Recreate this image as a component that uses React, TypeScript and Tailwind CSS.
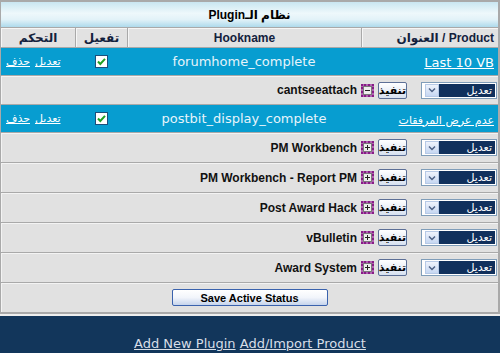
const font = "font-['Liberation_Sans','DejaVu_Sans',sans-serif]";
const verdana = "font-['DejaVu_Sans',sans-serif]";

type Row =
  | { kind: "hook"; product: string; hook: string; productLtr?: boolean }
  | { kind: "item"; label: string; minus?: boolean; h: string };

const rows: Row[] = [
  { kind: "hook", product: "Last 10 VB", hook: "forumhome_complete", productLtr: true },
  { kind: "item", label: "cantseeattach", minus: true, h: "h-[28px]" },
  { kind: "hook", product: "عدم عرض المرفقات", hook: "postbit_display_complete" },
  { kind: "item", label: "PM Workbench", h: "h-[29px]" },
  { kind: "item", label: "PM Workbench - Report PM", h: "h-[29px]" },
  { kind: "item", label: "Post Award Hack", h: "h-[29px]" },
  { kind: "item", label: "vBulletin", h: "h-[29px]" },
  { kind: "item", label: "Award System", h: "h-[29px]" },
];

function CheckBox() {
  return (
    <svg width="13" height="13" viewBox="0 0 13 13">
      <rect x="0.5" y="0.5" width="12" height="12" fill="#ffffff" stroke="#1c4f7c" />
      <path d="M3 6.5 L5.3 9 L10 3.8" fill="none" stroke="#21a121" strokeWidth="2" />
    </svg>
  );
}

function Toggle({ minus }: { minus?: boolean }) {
  return (
    <span className="flex h-[13px] w-[13px] items-center justify-center border-2 border-dotted border-[#861c86] bg-[#b060b0]">
      <svg width="9" height="9" viewBox="0 0 9 9">
        <rect x="0.5" y="0.5" width="8" height="8" fill="#eeeeee" stroke="#7a7a7a" />
        <path d="M2 4.5 H7" stroke="#222" strokeWidth="1" />
        {!minus && <path d="M4.5 2 V7" stroke="#222" strokeWidth="1" />}
      </svg>
    </span>
  );
}

function ActionSelect() {
  return (
    <div className="flex h-[17px] w-[76px] border border-[#7f9db9] bg-white p-px">
      <div className="flex flex-1 items-center bg-[#10305c] pr-[3px] text-[11px] text-white">
        تعديل
      </div>
      <div className="ml-[2px] flex w-[14px] items-center justify-center border border-[#b6c9e6] bg-[linear-gradient(to_bottom,#eef3fc,#c6d7f2)]">
        <svg width="8" height="6" viewBox="0 0 8 6">
          <path d="M1 1.5 L4 4.5 L7 1.5" fill="none" stroke="#4d6185" strokeWidth="1.5" />
        </svg>
      </div>
    </div>
  );
}

function ItemRow({ label, minus, h }: { label: string; minus?: boolean; h: string }) {
  return (
    <div className={`flex ${h} items-center bg-[#e1e1e1] pr-[1px] shadow-[inset_1px_1px_0_#f3f3f3]`}>
      <ActionSelect />
      <button className="ml-[4px] mr-[14px] flex h-[17px] w-[29px] items-center justify-center rounded-[2px] border border-[#5c6f96] bg-[linear-gradient(to_bottom,#ffffff,#d7e1f0)] text-[11px] font-bold text-black">
        تنفيذ
      </button>
      <Toggle minus={minus} />
      <span dir="ltr" className="mr-[4px] text-[12px] font-bold text-[#111]">
        {label}
      </span>
    </div>
  );
}

function HookRow({ product, hook, productLtr }: { product: string; hook: string; productLtr?: boolean }) {
  return (
    <div className="grid h-[27px] grid-cols-[137px_234px_52px_74px] items-center bg-[#079dd0] text-white">
      <div className="pr-[4px]">
        <a
          href="#"
          dir={productLtr ? "ltr" : undefined}
          className={`${verdana} ${productLtr ? "text-[13px]" : "text-[11px]"} text-white underline`}
        >
          {product}
        </a>
      </div>
      <div dir="ltr" className={`${verdana} text-center text-[13px] text-[#e6f4fb]`}>
        {hook}
      </div>
      <div className="flex justify-center">
        <CheckBox />
      </div>
      <div className="flex justify-end gap-[5px] pl-[5px] text-[11px]">
        <a href="#" className="text-white underline">تعديل</a>
        <a href="#" className="text-white underline">حذف</a>
      </div>
    </div>
  );
}

export default function App() {
  return (
    <div dir="rtl" className={`${font} w-[500px] bg-white`}>
      <div className="flex flex-col gap-px bg-[#a9a9a9] pb-[2px] pl-px pr-[2px] pt-[2px]">
        <div className="flex h-[25px] items-center justify-center bg-[linear-gradient(to_bottom,#c9e6f1,#eef8fb_45%,#e2f2f8_70%,#aedaec)] text-[12px] font-bold text-black">
          نظام الـPlugin
        </div>

        <div className="grid h-[19px] grid-cols-[136px_233px_51px_74px] gap-x-px text-[12px] font-bold text-[#13213d]">
          <div className="flex items-center bg-[#e2e2e2] pr-[4px] shadow-[inset_1px_1px_0_#f6f6f6]">
            Product / العنوان
          </div>
          <div className="flex items-center justify-center bg-[#e2e2e2] shadow-[inset_1px_1px_0_#f6f6f6]">
            Hookname
          </div>
          <div className="flex items-center justify-center bg-[#e2e2e2] shadow-[inset_1px_1px_0_#f6f6f6]">
            تفعيل
          </div>
          <div className="flex items-center justify-center bg-[#e2e2e2] shadow-[inset_1px_1px_0_#f6f6f6]">
            التحكم
          </div>
        </div>

        {rows.map((r, i) =>
          r.kind === "hook" ? (
            <HookRow key={i} product={r.product} hook={r.hook} productLtr={r.productLtr} />
          ) : (
            <ItemRow key={i} label={r.label} minus={r.minus} h={r.h} />
          )
        )}

        <div className="flex h-[29px] items-center justify-center bg-[#e1e1e1] shadow-[inset_1px_1px_0_#f3f3f3]">
          <button
            dir="ltr"
            className="h-[17px] w-[156px] rounded-[2px] border border-[#3a62ad] bg-[linear-gradient(to_bottom,#ffffff,#f2f5fb_50%,#c6d4ec)] text-[11px] font-bold text-black"
          >
            Save Active Status
          </button>
        </div>
      </div>
      <div className="h-[2px] bg-[#eeeeee]" />

      <div dir="ltr" className={`${verdana} h-[37px] bg-[#12365b] pt-[20px] text-center text-[13px] leading-[15px] text-[#d7dee7]`}>
        <a href="#" className="underline">Add New Plugin</a>{" "}
        <a href="#" className="underline">Add/Import Product</a>
      </div>
    </div>
  );
}
